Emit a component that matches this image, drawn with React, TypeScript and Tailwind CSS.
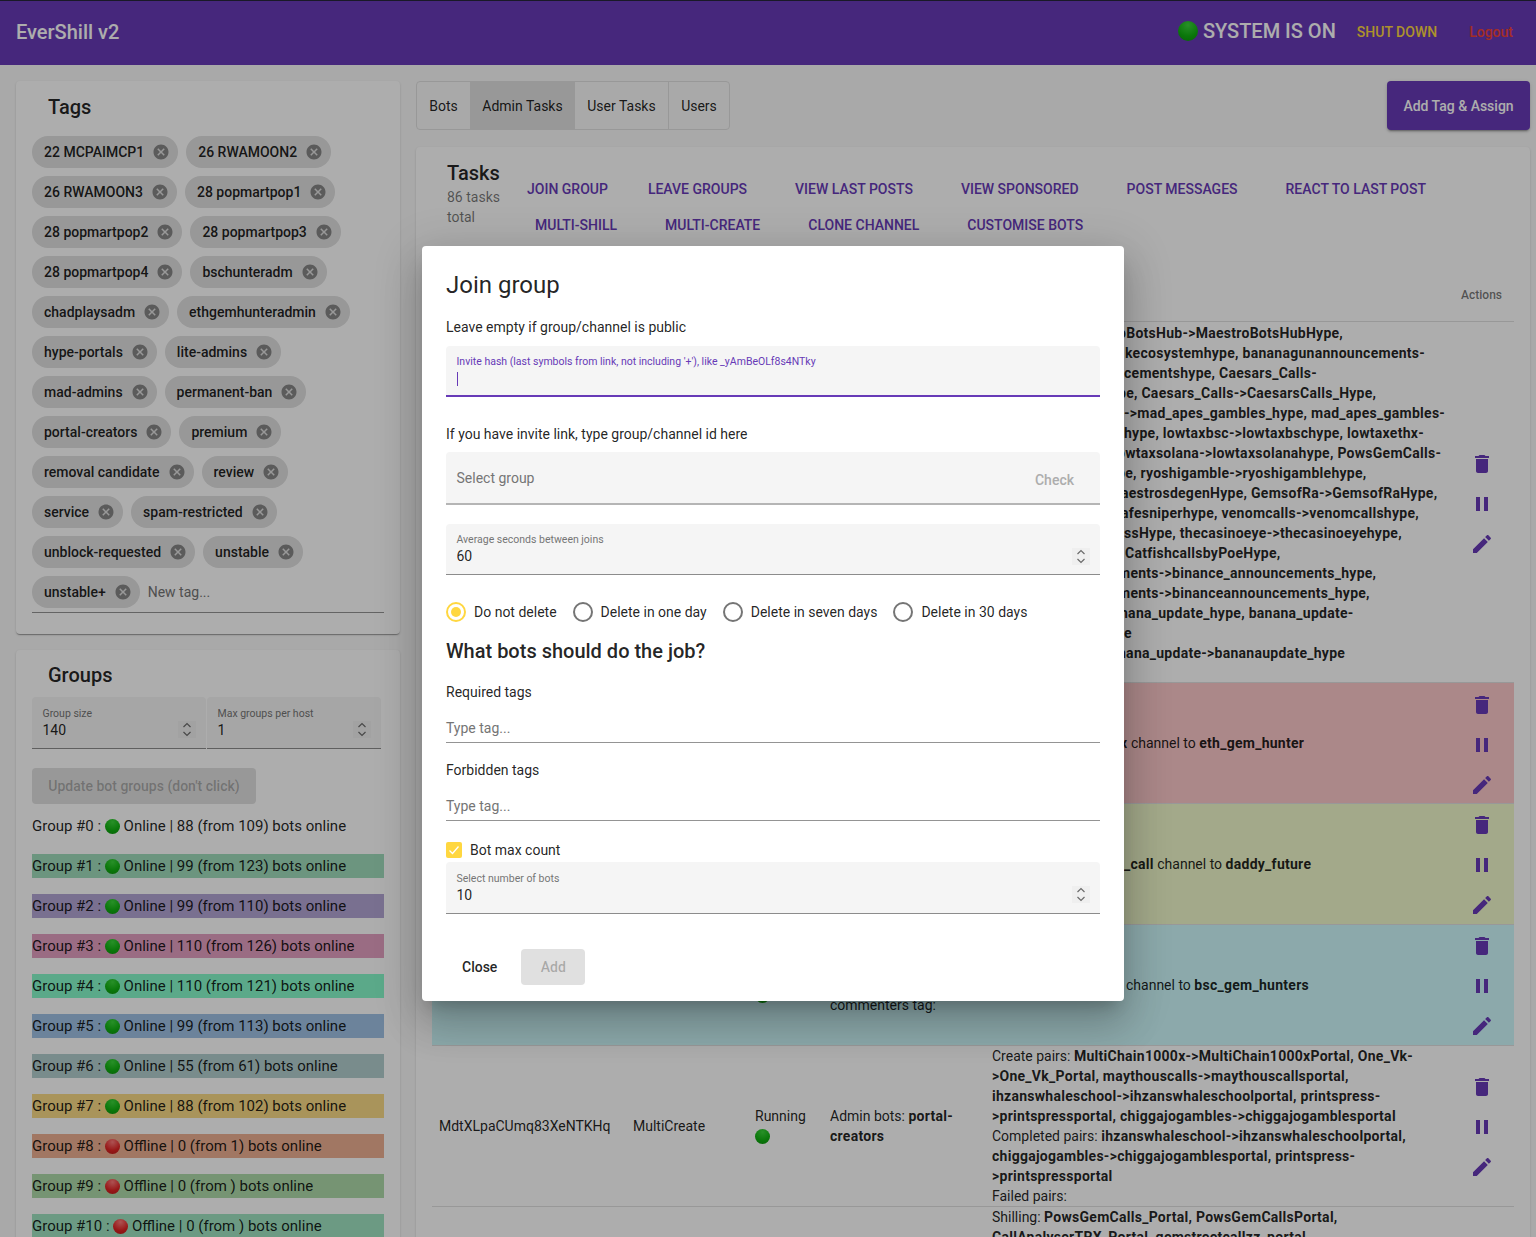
import React from "react";

const tags = [
  "22 MCPAIMCP1", "26 RWAMOON2", "26 RWAMOON3", "28 popmartpop1", "28 popmartpop2", "28 popmartpop3",
  "28 popmartpop4", "bschunteradm", "chadplaysadm", "ethgemhunteradmin", "hype-portals", "lite-admins",
  "mad-admins", "permanent-ban", "portal-creators", "premium", "removal candidate", "review",
  "service", "spam-restricted", "unblock-requested", "unstable", "unstable+",
];

const groups = [
  { n: 0, on: true, text: "88 (from 109)", bg: "" },
  { n: 1, on: true, text: "99 (from 123)", bg: "bg-[#9fdcbc]" },
  { n: 2, on: true, text: "99 (from 110)", bg: "bg-[#b3a5d4]" },
  { n: 3, on: true, text: "110 (from 126)", bg: "bg-[#e49fc2]" },
  { n: 4, on: true, text: "110 (from 121)", bg: "bg-[#87faca]" },
  { n: 5, on: true, text: "99 (from 113)", bg: "bg-[#9fc2e5]" },
  { n: 6, on: true, text: "55 (from 61)", bg: "bg-[#b3cece]" },
  { n: 7, on: true, text: "88 (from 102)", bg: "bg-[#fada87]" },
  { n: 8, on: false, text: "0 (from 1)", bg: "bg-[#eeb093]" },
  { n: 9, on: false, text: "0 (from )", bg: "bg-[#aedaaa]" },
  { n: 10, on: false, text: "0 (from )", bg: "bg-[#9fe4c2]" },
];

const pairLines = [
  { t: "oBotsHub->MaestroBotsHubHype,", c: "pl-[126px]" },
  { t: "kecosystemhype, bananagunannouncements-", c: "pl-[133px]" },
  { t: "cementshype, Caesars_Calls-", c: "pl-[132px]" },
  { t: "pe, Caesars_Calls->CaesarsCalls_Hype,", c: "pl-[126px]" },
  { t: "->mad_apes_gambles_hype, mad_apes_gambles-", c: "pl-[132px]" },
  { t: "hype, lowtaxbsc->lowtaxbschype, lowtaxethx-", c: "pl-[132px]" },
  { t: "owtaxsolana->lowtaxsolanahype, PowsGemCalls-", c: "pl-[125px]" },
  { t: "pe, ryoshigamble->ryoshigamblehype,", c: "pl-[125px]" },
  { t: "aestrosdegenHype, GemsofRa->GemsofRaHype,", c: "pl-[129px]" },
  { t: "afesniperhype, venomcalls->venomcallshype,", c: "pl-[129px]" },
  { t: "ssHype, thecasinoeye->thecasinoeyehype,", c: "pl-[132px]" },
  { t: "CatfishcallsbyPoeHype,", c: "pl-[133px]" },
  { t: "ments->binance_announcements_hype,", c: "pl-[126px]" },
  { t: "ments->binanceannouncements_hype,", c: "pl-[126px]" },
  { t: "nana_update_hype, banana_update-", c: "pl-[128px]" },
  { t: "e", c: "pl-[132px]" },
  { t: "nana_update->bananaupdate_hype", c: "pl-[126px]" },
];

function B({ children }: { children: React.ReactNode }) {
  return <b className="font-bold tracking-[0.27px]">{children}</b>;
}

function Ball({ on = true, big = false }: { on?: boolean; big?: boolean }) {
  const size = big ? "size-5" : "size-[15px]";
  const tone = on
    ? "bg-[radial-gradient(circle_at_50%_20%,#3bd43b,#10b010_60%,#0c900c)]"
    : "bg-[radial-gradient(circle_at_50%_20%,#ff7a7a,#e02424_60%,#b81a1a)]";
  return <span className={`inline-block shrink-0 rounded-full ${size} ${tone}`} />;
}

function Spinner() {
  return (
    <div className="absolute top-[24px] right-[10px] flex h-[17px] w-[18px] items-center justify-center bg-[#efefef]">
      <svg width="10" height="15" viewBox="0 0 10 15" fill="none" stroke="#6b6b6b" strokeWidth="1.2">
        <path d="M1.5 5 5 1.5 8.500 5" />
        <path d="M1.5 10 5 13.500 8.500 10" />
      </svg>
    </div>
  );
}

function NumberField({ label, value, className = "" }: { label: string; value: string; className?: string }) {
  return (
    <div className={`relative rounded-t-[4px] border-b border-[#8c8c8c] bg-[#f5f5f5] px-[10.5px] ${className}`}>
      <div className="text-[10.5px] leading-[14px] text-[#757575]">{label}</div>
      <div className="-mt-px text-[14px] leading-[20px]">{value}</div>
      <Spinner />
    </div>
  );
}

function Actions({ className = "mt-[2px]" }: { className?: string }) {
  return (
    <div className={`ml-[20px] flex w-[40px] flex-col text-[#673ab7] ${className}`}>
      <div className="flex h-[40px] items-center justify-center">
        <svg width="24" height="24" viewBox="0 0 24 24" fill="currentColor">
          <path d="M6 19c0 1.100.9 2 2 2h8c1.100 0 2-.9 2-2V7H6v12zM19 4h-3.500l-1-1h-5l-1 1H5v2h14V4z" />
        </svg>
      </div>
      <div className="flex h-[40px] items-center justify-center">
        <svg width="24" height="24" viewBox="0 0 24 24" fill="currentColor">
          <path d="M6 19h4V5H6v14zm8-14v14h4V5h-4z" />
        </svg>
      </div>
      <div className="flex h-[40px] items-center justify-center">
        <svg width="24" height="24" viewBox="0 0 24 24" fill="currentColor">
          <path d="M3 17.250V21h3.750L17.810 9.940l-3.750-3.750L3 17.250zM20.710 7.040c.39-.39.39-1.020 0-1.410l-2.340-2.340c-.39-.39-1.020-.39-1.410 0l-1.830 1.830 3.750 3.750 1.830-1.830z" />
        </svg>
      </div>
    </div>
  );
}

function Radio({ label, checked = false }: { label: string; checked?: boolean }) {
  return (
    <div className="flex items-center gap-2">
      <span
        className={`flex size-5 items-center justify-center rounded-full border-2 ${
          checked ? "border-[#ffd740]" : "border-[#757575]"
        }`}
      >
        {checked && <span className="size-[10px] rounded-full bg-[#ffd740]" />}
      </span>
      <span className="text-[14px] leading-[20px]">{label}</span>
    </div>
  );
}

function Dialog() {
  return (
    <div className="absolute left-[422px] top-[246px] w-[702px] rounded-[4px] bg-white px-6 pt-6 pb-4 text-black/87 shadow-[0_11px_15px_-7px_rgba(0,0,0,.2),0_24px_38px_3px_rgba(0,0,0,.14),0_9px_46px_8px_rgba(0,0,0,.12)]">
      <h2 className="text-[24px] leading-[30px] font-normal">Join group</h2>
      <p className="mt-[17px] text-[14px] leading-[20px]">Leave empty if group/channel is public</p>
      <div className="mt-[9px] h-[51px] rounded-t-[4px] border-b-2 border-[#673ab7] bg-[#f5f5f5] px-[10.5px] pt-[9px]">
        <div className="text-[10.5px] leading-[14px] text-[#673ab7]">
          Invite hash (last symbols from link, not including '+'), like _yAmBeOLf8s4NTky
        </div>
        <div className="mt-[3px] h-[14px] w-px bg-[#673ab7]" />
      </div>
      <p className="mt-[27px] text-[14px] leading-[20px]">If you have invite link, type group/channel id here</p>
      <div className="mt-[8px] flex h-[53px] items-center justify-between rounded-t-[4px] border-b-2 border-[#b5b5b5] bg-[#f5f5f5] pt-px pr-[26px] pl-[10.5px]">
        <span className="text-[14px] leading-[20px] text-[#757575]">Select group</span>
        <span className="mt-[4px] text-[14px] leading-[20px] font-medium text-[#adadad]">Check</span>
      </div>
      <NumberField label="Average seconds between joins" value="60" className="mt-[19px] h-[51px] pt-[9px]" />
      <div className="mt-[27px] flex gap-4">
        <Radio label="Do not delete" checked />
        <Radio label="Delete in one day" />
        <Radio label="Delete in seven days" />
        <Radio label="Delete in 30 days" />
      </div>
      <h3 className="mt-[13px] text-[20px] leading-[32px] font-medium">What bots should do the job?</h3>
      <p className="mt-[15px] text-[14px] leading-[20px]">Required tags</p>
      <div className="mt-[10px] flex h-[31px] items-center border-b border-[#949494] pt-[3px] text-[14px] text-[#757575]">
        Type tag...
      </div>
      <p className="mt-[17px] text-[14px] leading-[20px]">Forbidden tags</p>
      <div className="mt-[10px] flex h-[31px] items-center border-b border-[#949494] pt-[3px] text-[14px] text-[#757575]">
        Type tag...
      </div>
      <div className="mt-[19px] flex h-[20px] items-center gap-2">
        <span className="flex size-4 items-center justify-center rounded-[2px] bg-[#ffd740]">
          <svg width="12" height="12" viewBox="0 0 12 12" fill="none" stroke="#fff" strokeWidth="1.300">
            <path d="M1.500 6.500 4.500 9.500 10.500 2.500" />
          </svg>
        </span>
        <span className="text-[14px] leading-[20px]">Bot max count</span>
      </div>
      <NumberField label="Select number of bots" value="10" className="mt-[2px] h-[52px] pt-[10px]" />
      <div className="mt-[35px] flex gap-2">
        <button className="h-9 rounded-[4px] px-4 text-[14px] font-medium">Close</button>
        <button className="h-9 w-[64px] rounded-[4px] bg-[#e0e0e0] text-[14px] font-medium text-black/26">Add</button>
      </div>
    </div>
  );
}

function Sidebar() {
  return (
    <div className="flex w-[384px] flex-col gap-4">
      <section className="h-[553px] rounded-[4px] bg-white px-4 pt-[10px] shadow-[0_2px_1px_-1px_rgba(0,0,0,.2),0_1px_1px_0_rgba(0,0,0,.14),0_1px_3px_0_rgba(0,0,0,.12)]">
        <h2 className="pl-4 text-[20px] leading-[32px] font-medium">Tags</h2>
        <div className="mt-[13px] flex flex-wrap items-center gap-2 border-b border-[#949494] pb-[4px]">
          {tags.map((tag) => (
            <span
              key={tag}
              className="flex h-8 items-center gap-2 rounded-full bg-[#e0e0e0] pr-2 pl-3 text-[14px] font-medium text-black/87"
            >
              {tag}
              <svg width="18" height="18" viewBox="0 0 24 24" fill="#000" fillOpacity=".4">
                <path d="M12 2C6.470 2 2 6.470 2 12s4.470 10 10 10 10-4.470 10-10S17.530 2 12 2zm5 13.590L15.590 17 12 13.410 8.410 17 7 15.590 10.590 12 7 8.410 8.410 7 12 10.590 15.590 7 17 8.410 13.410 12 17 15.590z" />
              </svg>
            </span>
          ))}
          <span className="text-[14px] text-[#757575]">New tag...</span>
        </div>
      </section>
      <section className="rounded-[4px] bg-white px-4 pt-[9px] pb-4 shadow-[0_2px_1px_-1px_rgba(0,0,0,.2),0_1px_1px_0_rgba(0,0,0,.14),0_1px_3px_0_rgba(0,0,0,.12)]">
        <h2 className="pl-4 text-[20px] leading-[32px] font-medium">Groups</h2>
        <div className="mt-[6px] flex gap-px">
          <NumberField label="Group size" value="140" className="h-[52px] w-[174px] pt-[10px]" />
          <NumberField label="Max groups per host" value="1" className="h-[52px] w-[174px] pt-[10px]" />
        </div>
        <button className="mt-[19px] h-9 w-[224px] rounded-[4px] bg-[#e0e0e0] text-[14px] font-medium text-black/26">
          Update bot groups (don't click)
        </button>
        <div className="mt-[10px] flex flex-col gap-4">
          {groups.map((g) => (
            <div key={g.n} className={`flex h-6 items-center whitespace-pre text-[15px] leading-[24px] text-black/87 ${g.bg}`}>
              {`Group #${g.n} : `}
              <Ball on={g.on} />
              {` ${g.on ? "Online" : "Offline"} | ${g.text} bots online`}
            </div>
          ))}
        </div>
      </section>
    </div>
  );
}

function TasksCard() {
  const rowOne = ["LEAVE GROUPS", "VIEW LAST POSTS", "VIEW SPONSORED", "POST MESSAGES", "REACT TO LAST POST"];
  const rowTwo = ["MULTI-SHILL", "MULTI-CREATE", "CLONE CHANNEL", "CUSTOMISE BOTS"];
  return (
    <section className="rounded-[4px] bg-white px-4 pt-[10px] pb-4 text-black/87 shadow-[0_2px_1px_-1px_rgba(0,0,0,.2),0_1px_1px_0_rgba(0,0,0,.14),0_1px_3px_0_rgba(0,0,0,.12)]">
      <div className="flex">
        <div className="w-[79px] pl-[15px]">
          <h2 className="text-[20px] leading-[32px] font-medium">Tasks</h2>
          <p className="-mt-[2px] text-[14px] leading-[20px] text-black/54">86 tasks total</p>
        </div>
        <div className="pt-[14px] text-[14px] font-medium text-[#673ab7]">
          <div className="flex h-9">
            <button className="px-4">JOIN GROUP</button>
            {rowOne.map((b) => (
              <button key={b} className="mx-2 px-4">{b}</button>
            ))}
          </div>
          <div className="flex h-9">
            {rowTwo.map((b) => (
              <button key={b} className="mx-2 px-4">{b}</button>
            ))}
          </div>
        </div>
      </div>
      <div className="mt-[24px] flex h-[55px] items-center justify-end border-b border-[#e0e0e0] pt-[2px] pr-[12px] text-[12px] font-medium text-black/54">
        Actions
      </div>

      <div className="flex h-[361px] border-b border-[#e0e0e0] text-[14px] leading-[20px]">
        <div className="w-[560px]" />
        <div className="w-[450px] whitespace-nowrap pt-px font-bold tracking-[0.27px]">
          {pairLines.map((l, i) => (
            <div key={i} className={l.c}>{l.t}</div>
          ))}
        </div>
        <div className="flex items-center">
          <Actions className="mt-[4px]" />
        </div>
      </div>

      <div className="flex h-[121px] items-center border-b border-[#e0e0e0] bg-[#fcc9cb] text-[14px] leading-[20px]">
        <div className="w-[560px]" />
        <div className="w-[450px] whitespace-nowrap pl-[128px]">
          <B>x</B> channel to <B>eth_gem_hunter</B>
        </div>
        <Actions className="mt-[4px]" />
      </div>
      <div className="flex h-[121px] items-center border-b border-[#e0e0e0] bg-[#f1facc] text-[14px] leading-[20px]">
        <div className="w-[560px]" />
        <div className="w-[450px] whitespace-nowrap pl-[132px]">
          <B>_call</B> channel to <B>daddy_future</B>
        </div>
        <Actions />
      </div>
      <div className="flex h-[121px] items-center border-b border-[#e0e0e0] bg-[#cefafd] text-[14px] leading-[20px]">
        <div className="w-[323px]" />
        <div className="w-[75px] self-start pt-[63px]">
          <Ball />
        </div>
        <div className="w-[162px] self-start pt-[70px]">commenters tag:</div>
        <div className="w-[450px] whitespace-nowrap pl-[134px]">
          channel to <B>bsc_gem_hunters</B>
        </div>
        <Actions />
      </div>

      <div className="flex h-[161px] items-center border-b border-[#e0e0e0] text-[14px] leading-[20px]">
        <div className="w-[200px] pl-[7px]">MdtXLpaCUmq83XeNTKHq</div>
        <div className="w-[123px] pl-px">MultiCreate</div>
        <div className="w-[75px]">
          <div>Running</div>
          <div className="flex h-5 items-center"><Ball /></div>
        </div>
        <div className="w-[162px]">
          Admin bots: <B>portal-<br />creators</B>
        </div>
        <div className="w-[450px] whitespace-nowrap">
          Create pairs: <B>MultiChain1000x-&gt;MultiChain1000xPortal, One_Vk-</B>
          <br />
          <B>&gt;One_Vk_Portal, maythouscalls-&gt;maythouscallsportal,</B>
          <br />
          <B>ihzanswhaleschool-&gt;ihzanswhaleschoolportal, printspress-</B>
          <br />
          <B>&gt;printspressportal, chiggajogambles-&gt;chiggajogamblesportal</B>
          <br />
          Completed pairs: <B>ihzanswhaleschool-&gt;ihzanswhaleschoolportal,</B>
          <br />
          <B>chiggajogambles-&gt;chiggajogamblesportal, printspress-</B>
          <br />
          <B>&gt;printspressportal</B>
          <br />
          Failed pairs:
        </div>
        <Actions />
      </div>
      <div className="flex text-[14px] leading-[20px]">
        <div className="w-[560px]" />
        <div className="whitespace-nowrap">
          Shilling: <B>PowsGemCalls_Portal, PowsGemCallsPortal,</B>
          <br />
          <B>CallAnalyserTRX_Portal, gemstreetcallzz_portal,</B>
        </div>
      </div>
    </section>
  );
}

export default function App() {
  return (
    <div className="relative h-[1237px] overflow-hidden bg-[#fafafa] font-['Roboto',sans-serif] text-black/87">
      <header className="flex h-[65px] items-center border-t border-[#26263a] bg-[#673ab7] pb-[2px] pl-4 text-white">
        <span className="text-[20px] font-medium">EverShill v2</span>
        <div className="ml-auto flex items-center">
          <div className="mb-[3px] flex items-center">
            <Ball big />
            <span className="ml-[5px] text-[20px] font-medium">SYSTEM IS ON</span>
          </div>
          <span className="ml-[21px] text-[14px] font-medium text-[#ffd740]">SHUT DOWN</span>
          <span className="mr-[23px] ml-[32px] text-[14px] font-medium text-[#f44336]">Logout</span>
        </div>
      </header>
      <div className="flex gap-4 pt-4 pl-4">
        <Sidebar />
        <main className="w-[1114px]">
          <div className="flex justify-between">
            <div className="flex h-[49px] rounded-[4px] border border-[#e0e0e0] text-[14px]">
              <div className="flex w-[53px] items-center justify-center pt-[2px]">Bots</div>
              <div className="flex w-[105px] items-center justify-center bg-[#e0e0e0] pt-[2px]">Admin Tasks</div>
              <div className="flex w-[93px] items-center justify-center pt-[2px]">User Tasks</div>
              <div className="flex w-[61px] items-center justify-center border-l border-[#e0e0e0] pt-[2px]">Users</div>
            </div>
            <button className="h-[49px] w-[143px] rounded-[4px] bg-[#673ab7] pt-[2px] text-[14px] font-medium text-white shadow-[0_3px_1px_-2px_rgba(0,0,0,.2),0_2px_2px_0_rgba(0,0,0,.14),0_1px_5px_0_rgba(0,0,0,.12)]">
              Add Tag &amp; Assign
            </button>
          </div>
          <div className="mt-[17px]">
            <TasksCard />
          </div>
        </main>
      </div>
      <div className="absolute inset-0 bg-black/32" />
      <Dialog />
    </div>
  );
}
